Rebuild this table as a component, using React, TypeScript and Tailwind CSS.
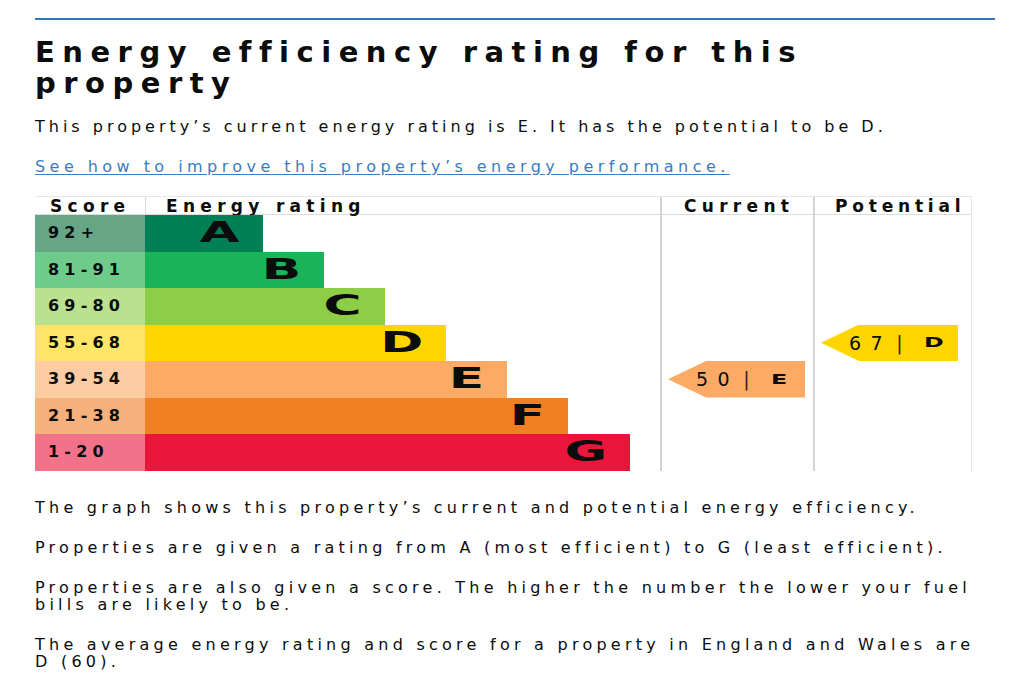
const bands = [
  { score: '92+', letter: 'A', bar: 'bg-[#008054]', cell: 'bg-[#66a687]', width: 'w-[118px]' },
  { score: '81-91', letter: 'B', bar: 'bg-[#19b459]', cell: 'bg-[#6fcb8b]', width: 'w-[179px]' },
  { score: '69-80', letter: 'C', bar: 'bg-[#8dce46]', cell: 'bg-[#b9e190]', width: 'w-[240px]' },
  { score: '55-68', letter: 'D', bar: 'bg-[#ffd500]', cell: 'bg-[#ffe566]', width: 'w-[301px]' },
  { score: '39-54', letter: 'E', bar: 'bg-[#fcaa65]', cell: 'bg-[#fdcca3]', width: 'w-[362px]' },
  { score: '21-38', letter: 'F', bar: 'bg-[#ef8023]', cell: 'bg-[#f5b07b]', width: 'w-[423px]' },
  { score: '1-20', letter: 'G', bar: 'bg-[#e9153b]', cell: 'bg-[#f27389]', width: 'w-[485px]' },
];

function Arrow({ value, letter, color }: { value: number; letter: string; color: string }) {
  return (
    <div
      className={`flex h-full w-[137px] items-center pl-[28px] text-[19px] text-[#0b0c0c] [clip-path:polygon(38px_0,100%_0,100%_100%,38px_100%,0_50%)] ${color}`}
    >
      <span className="tracking-[9.5px]">{value}</span>
      <span className="ml-[4px] text-[#3a1c1c]">|</span>
      <span className="ml-[21px] inline-block origin-left scale-x-[1.7] text-[14px] font-bold">
        {letter}
      </span>
    </div>
  );
}

export default function App() {
  return (
    <div className="min-h-screen bg-white text-[#0b0c0c] [font-family:'DejaVu_Sans',sans-serif]">
      <div className="ml-[35px] w-[960px] pt-[18px]">
        <div className="h-[2px] bg-[#2f78c0]" />

        <h1 className="mt-[17px] w-[820px] text-[29px] font-bold leading-[31px] tracking-[7.5px]">
          Energy efficiency rating for this property
        </h1>

        <p className="mt-[19px] text-[16px] leading-[17px] tracking-[4px]">
          This property’s current energy rating is E. It has the potential to be D.
        </p>

        <p className="mt-[23px] text-[16px] leading-[17px] tracking-[4.45px]">
          <a href="#" className="text-[#3a7cc4] underline underline-offset-2">
            See how to improve this property’s energy performance.
          </a>
        </p>

        <div className="mt-[21px] w-[937px] border-t border-r border-[#e6e6e6]">
          <div className="grid h-[18px] grid-cols-[110px_515px_153px_159px] border-b border-[#dcdcdc] text-[17px] font-bold leading-[18px] tracking-[5.3px]">
            <div className="pl-[15px]">Score</div>
            <div className="border-l border-[#dcdcdc] pl-[20px]">Energy rating</div>
            <div className="border-l-2 border-[#d4d4d4] pl-[22px]">Current</div>
            <div className="border-l-2 border-[#d4d4d4] pl-[20px] tracking-[4.8px]">Potential</div>
          </div>

          {bands.map((b) => (
            <div key={b.letter} className="grid h-[36.5px] grid-cols-[110px_515px_153px_159px]">
              <div className={`flex items-center pl-[13px] text-[16px] font-bold tracking-[5.2px] ${b.cell}`}>
                {b.score}
              </div>
              <div className="flex">
                <div className={`flex h-full items-center justify-end pr-[23px] ${b.width} ${b.bar}`}>
                  <span className="inline-block origin-right scale-x-[1.85] text-[28px] font-bold leading-none">
                    {b.letter}
                  </span>
                </div>
              </div>
              <div className="border-l-2 border-[#d4d4d4] pl-[6px]">
                {b.letter === 'E' && <Arrow value={50} letter="E" color="bg-[#fcaa65]" />}
              </div>
              <div className="border-l-2 border-[#d4d4d4] pl-[6px]">
                {b.letter === 'D' && <Arrow value={67} letter="D" color="bg-[#ffd500]" />}
              </div>
            </div>
          ))}
        </div>

        <div className="mt-[28px] w-[948px] space-y-[23px] text-[16px] leading-[17px] tracking-[4.25px]">
          <p>The graph shows this property’s current and potential energy efficiency.</p>
          <p>Properties are given a rating from A (most efficient) to G (least efficient).</p>
          <p>
            Properties are also given a score. The higher the number the lower your fuel bills are
            likely to be.
          </p>
          <p>The average energy rating and score for a property in England and Wales are D (60).</p>
        </div>
      </div>
    </div>
  );
}
